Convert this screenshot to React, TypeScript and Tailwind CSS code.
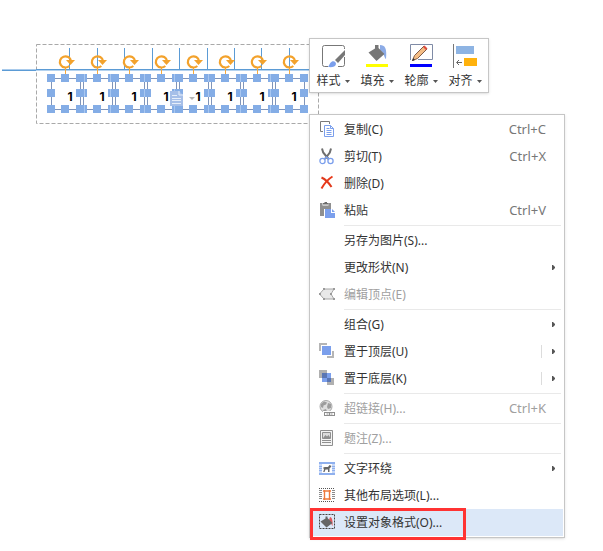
import type { ReactNode } from 'react';

type MenuEntry = {
  label: string;
  icon?: ReactNode;
  shortcut?: string;
  submenu?: boolean;
  split?: boolean;
  disabled?: boolean;
  active?: boolean;
};

function MenuIcon({ children }: { children: ReactNode }) {
  return (
    <svg width="17" height="17" viewBox="0 0 17 17" fill="none" aria-hidden="true">
      {children}
    </svg>
  );
}

const copyIcon = (
  <MenuIcon>
    <path d="M4 10.5H1.5v-10h9V3" stroke="#7a7a7a" />
    <path d="M5.5 4.5h6l3 3v8h-9z" fill="#fff" stroke="#7b9fec" />
    <path d="M11.5 4.5v3h3M7.5 7.5h3M7.5 9.5h5M7.5 11.5h5M7.5 13.5h5" stroke="#7b9fec" />
  </MenuIcon>
);

const cutIcon = (
  <MenuIcon>
    <path d="M3 0.5l1.2 4L9.5 11M12 0.5l-1.2 4L6 11" stroke="#6f6f6f" strokeWidth="2" />
    <circle cx="3.5" cy="13" r="2.6" stroke="#7b9fec" strokeWidth="1.3" />
    <circle cx="11.5" cy="13" r="2.6" stroke="#7b9fec" strokeWidth="1.3" />
    <path d="M5 11.3L7.5 9l2.5 2.3" stroke="#7b9fec" strokeWidth="1.3" />
  </MenuIcon>
);

const deleteIcon = (
  <MenuIcon>
    <path d="M2.500 2.500C6 4 10 8 12.5 12" stroke="#e03a1c" strokeWidth="2" />
    <path d="M13.5 1.5C8.5 4.5 5 9 2.5 13.5" stroke="#e8391a" strokeWidth="2" />
  </MenuIcon>
);

const pasteIcon = (
  <MenuIcon>
    <path d="M1 1h2.5v2.5h6V1H12v6H5v7H1z" fill="#8f8f8f" />
    <path d="M4 1h1.5V0h2.5v1h1.500v1.500H4z" fill="#6c6c6c" />
    <path d="M6 7h6v4h4v5H6z" fill="#7b9fec" />
    <path d="M13 7l3 3h-3z" fill="#7b9fec" />
  </MenuIcon>
);

const verticesIcon = (
  <MenuIcon>
    <path d="M0.5 8L5 3h10l-3 5 3 5H5z" fill="#e8e8e8" stroke="#a6a6a6" />
    <path d="M4 2h2v2H4zM14 2h2v2h-2zM4 12h2v2H4zM14 12h2v2h-2zM0 7h2v2H0zM11 7h2v2h-2z" fill="#9a9a9a" />
  </MenuIcon>
);

const frontIcon = (
  <MenuIcon>
    <path d="M0 0h8v2H2v6H0z" fill="#b5b5b5" />
    <path d="M13 8h2v7H8v-2h5z" fill="#b5b5b5" />
    <path d="M3 3h9v9H3z" fill="#7b9fec" />
  </MenuIcon>
);

const backIcon = (
  <MenuIcon>
    <path d="M3 3h9v9H3z" fill="#7b9fec" />
    <path d="M0 0h8v3H3v5H0z" fill="#b0b0b0" />
    <path d="M12 8h3v7H8v-3h4z" fill="#b0b0b0" />
    <path d="M3 3h5v5H3zM8 8h4v4H8z" fill="#5a76b4" />
  </MenuIcon>
);

const linkIcon = (
  <MenuIcon>
    <circle cx="7" cy="6.500" r="6" fill="#dedede" stroke="#a8a8a8" />
    <path d="M2 4l3-2.5 3 1-1 2-2.5 1L4 8 2 7zM9 3l3 1v4l-3 1-1-2zM4 10l3-1 1 2.500-3 .5z" fill="#9c9c9c" />
    <path d="M4 11h13v6H4z" fill="#fff" />
    <rect x="5.5" y="12.5" width="5" height="3" stroke="#8f8f8f" />
    <rect x="10.5" y="12.5" width="5" height="3" stroke="#8f8f8f" />
    <path d="M7.5 14h2M11.5 14h2" stroke="#8f8f8f" />
  </MenuIcon>
);

const captionIcon = (
  <MenuIcon>
    <path d="M1.5 0.5h12v15h-12z" fill="#f4f4f4" stroke="#8f8f8f" />
    <path d="M3.5 2.5h8v6h-8z" fill="#dcdcdc" stroke="#8f8f8f" />
    <path d="M4 8l2.5-3L8 6.500 9.5 5l2 3z" fill="#8f8f8f" />
    <path d="M3 10.5h9M3 12.5h9" stroke="#8f8f8f" />
  </MenuIcon>
);

const wrapIcon = (
  <MenuIcon>
    <path d="M0 2h16v13H0z" fill="#c9d9f7" />
    <path d="M0 2h16v2H0zM0 13h16v2H0z" fill="#8fb0ee" />
    <path d="M0 6.500h4M0 8.500h4M0 10.500h4M12 6.500h4M12 8.500h4M12 10.500h4" stroke="#8fb0ee" />
    <path d="M3 4h10v9H3z" fill="#fff" />
    <path d="M4 7.500h1l.5-.5H9l1.500-2 2 1-1 1.5-1 1V12H9V9.500H6.500L5.500 12H4.200l.8-2.500z" fill="#666" />
  </MenuIcon>
);

const layoutIcon = (
  <MenuIcon>
    <path d="M0 1.5h16M0 14.5h16" stroke="#555" strokeDasharray="1 1" />
    <path
      d="M0 3.5h3M0 5.5h3M0 7.5h3M0 9.5h3M0 11.5h3M13 3.5h3M13 5.5h3M13 7.5h3M13 9.5h3M13 11.5h3"
      stroke="#8a8a8a"
    />
    <path d="M4 4h8M4 12h8M5.5 3v10M10.5 3v10" stroke="#ee7b3c" strokeWidth="1.4" />
  </MenuIcon>
);

const formatIcon = (
  <MenuIcon>
    <path d="M0.5 0.5h15v14H0.5z" stroke="#444" strokeDasharray="2 1" />
    <path d="M11 3c2 .5 3 3 2.500 9-1-1-1.500-4-3.500-6z" fill="#e0575c" />
    <path d="M1.500 7.500l5-3V2.500h2v1.500l5 5-6 4.500z" fill="#666" />
  </MenuIcon>
);

const menuGroups: MenuEntry[][] = [
  [
    { label: '复制(C)', icon: copyIcon, shortcut: 'Ctrl+C' },
    { label: '剪切(T)', icon: cutIcon, shortcut: 'Ctrl+X' },
    { label: '删除(D)', icon: deleteIcon },
    { label: '粘贴', icon: pasteIcon, shortcut: 'Ctrl+V' },
  ],
  [
    { label: '另存为图片(S)...' },
    { label: '更改形状(N)', submenu: true },
    { label: '编辑顶点(E)', icon: verticesIcon, disabled: true },
  ],
  [
    { label: '组合(G)', submenu: true },
    { label: '置于顶层(U)', icon: frontIcon, submenu: true, split: true },
    { label: '置于底层(K)', icon: backIcon, submenu: true, split: true },
  ],
  [{ label: '超链接(H)...', icon: linkIcon, shortcut: 'Ctrl+K', disabled: true }],
  [{ label: '题注(Z)...', icon: captionIcon, disabled: true }],
  [
    { label: '文字环绕', icon: wrapIcon, submenu: true },
    { label: '其他布局选项(L)...', icon: layoutIcon },
    { label: '设置对象格式(O)...', icon: formatIcon, active: true },
  ],
];

const tools = [
  {
    label: '样式',
    icon: (
      <>
        <path
          d="M7 22.5H3.5a2 2 0 01-2-2v-17a2 2 0 012-2h18a2 2 0 012 2V5M23.5 13v7.5a2 2 0 01-2 2H17"
          stroke="#777"
        />
        <path d="M24 6v5l-7 8-3-3z" fill="#777" />
        <path d="M7 23c1-1 1.5-4 4-5.5 2-1 4 .5 4 2.5-.5 3-4 3.5-8 3z" fill="#7b9fec" />
      </>
    ),
  },
  {
    label: '填充',
    icon: (
      <>
        <path d="M15 1c5 0 7 3 6 14-2-1-1.500-6-6-9z" fill="#8cabe6" />
        <path d="M3.500 8.500L10 4.500V1h3.500v3l6 6-8 7z" fill="#777" />
        <path d="M1 20h22v3H1z" fill="#ffff00" />
      </>
    ),
  },
  {
    label: '轮廓',
    icon: (
      <>
        <path d="M1.5 16V0.5h22v15H9" stroke="#7f8ba6" />
        <path d="M3.5 16.5l2-5L15 2l3 3-9.500 9.500z" fill="#f4bd85" stroke="#805b48" />
        <path d="M14 3l1.5-1.5 3 3L17 6z" fill="#dd4b3f" />
        <path d="M3 17l1.200-3L6 16z" fill="#333" />
        <path d="M1 20h22v3H1z" fill="#0000ff" />
      </>
    ),
  },
  {
    label: '对齐',
    icon: (
      <>
        <path d="M0.5 0v24" stroke="#777" />
        <path d="M3 2h18v8H3z" fill="#8eb4e3" />
        <path d="M11 14h13v8H11z" fill="#ffb20d" />
        <path d="M9 18.5H4M6 16l-2.5 2.5L6 21" stroke="#666" />
      </>
    ),
  },
];

const ticks = [69, 97, 124, 152, 179, 207, 234, 261, 289];
const boxes = [0, 1, 2, 3, 4, 5, 6, 7].map((i) => 51 + i * 32);
const seams = [84, 110, 144, 174, 208, 240, 270];

function Drawing() {
  return (
    <div className="absolute left-0 top-0">
      <svg width="320" height="126" viewBox="0 0 320 126" fill="none" aria-hidden="true">
        <rect x="36.5" y="44.5" width="282" height="79" stroke="#a9a9a9" strokeDasharray="4 2" />
        <path d="M2 69.5h308" stroke="#a9cbec" />
        <path d="M2 70.5h34" stroke="#5b9bd5" />
        <path d="M36 69.5h274" stroke="#5b9bd5" />
        <path d="M36 70.5h274" stroke="#b4d2ef" />
        {ticks.map((x) => (
          <path key={x} d={`M${x + 0.5} 48v21`} stroke="#5b9bd5" />
        ))}
        {boxes.map((x) => (
          <g key={x}>
            <rect x={x + 0.5} y="78.5" width="29" height="31" fill="#fff" stroke="#8095ba" />
            <path d={`M${x + 14.5} 67v7`} stroke="#f5a93c" />
            <path d={`M${x + 18.3} 66a5.600 5.600 0 1 1 1.700-5`} stroke="#f3a22c" strokeWidth="2.2" />
            <path d={`M${x + 15} 60h9l-4.500 5z`} fill="#f3a22c" />
          </g>
        ))}
        {boxes.map((x) => (
          <path
            key={x}
            d={`M${x - 4} 74h8v8h-8zM${x + 10} 74h8v8h-8zM${x + 25} 74h8v8h-8zM${x - 4} 89h8v8h-8zM${x + 25} 89h8v8h-8zM${x - 4} 105h8v8h-8zM${x + 10} 105h8v8h-8zM${x + 25} 105h8v8h-8z`}
            fill="#84ade6"
          />
        ))}
        {seams.map((x) => (
          <path key={x} d={`M${x + 0.5} 74v8m0 7v8m0 8v8`} stroke="#a9c7f0" />
        ))}
      </svg>
      {boxes.map((x) => (
        <span
          key={x}
          className="absolute top-[89px] w-2 text-center font-['Inter',sans-serif] text-[12px] leading-4 font-bold text-black"
          style={{ left: x + 15 }}
        >
          1
        </span>
      ))}
      <svg
        className="absolute left-[170px] top-[91px]"
        width="26"
        height="15"
        viewBox="0 0 26 15"
        fill="none"
        aria-hidden="true"
      >
        <path d="M0 0h9l4 4v11H0z" fill="#a6bfe8" />
        <path d="M9 0v4h4" stroke="#e6eefa" />
        <path d="M2 4.5h5M2 7.5h9M2 9.5h9M2 12.5h9" stroke="#e6eefa" />
        <path d="M19 6h6l-3 3z" fill="#b5b5b5" />
      </svg>
    </div>
  );
}

function ShapeToolbar() {
  return (
    <div
      role="toolbar"
      className="absolute left-[309px] top-[38px] flex w-45 border border-[#c6c6c6] bg-white p-px shadow-sm"
    >
      {tools.map((tool) => (
        <button key={tool.label} type="button" className="flex h-[51px] flex-1 flex-col items-center gap-[5px] pt-1">
          <svg width="24" height="24" viewBox="0 0 24 24" fill="none" aria-hidden="true">
            {tool.icon}
          </svg>
          <span className="flex items-center gap-1 text-xs leading-4">
            {tool.label}
            <svg width="5" height="3" viewBox="0 0 5 3" aria-hidden="true">
              <path d="M0 0h5L2.5 3z" fill="#555" />
            </svg>
          </span>
        </button>
      ))}
    </div>
  );
}

function MenuItem({ entry }: { entry: MenuEntry }) {
  return (
    <button
      type="button"
      role="menuitem"
      disabled={entry.disabled}
      className={`flex h-[27px] w-full items-center pl-2 text-left text-xs ${entry.active ? 'bg-[#dce8f8]' : ''} ${
        entry.disabled ? 'text-[#a0a0a0]' : 'text-[#333]'
      }`}
    >
      <span className="w-[25px] shrink-0">{entry.icon}</span>
      <span className="flex-1">{entry.label}</span>
      {entry.shortcut && (
        <span className={`pr-[17px] text-[13px] ${entry.disabled ? 'text-[#a0a0a0]' : 'text-[#777]'}`}>
          {entry.shortcut}
        </span>
      )}
      {entry.submenu && (
        <span className={`flex h-[13px] items-center pr-2 ${entry.split ? 'border-l border-[#dcdcdc] pl-2.5' : ''}`}>
          <svg width="3" height="5" viewBox="0 0 3 5" aria-hidden="true">
            <path d="M0 0h1l2 2v1L1 5H0z" fill="#555" />
          </svg>
        </span>
      )}
    </button>
  );
}

function ContextMenu() {
  return (
    <div
      role="menu"
      className="absolute left-[309px] top-[114px] w-64 border border-[#c6c6c6] bg-white p-px shadow-sm"
    >
      {menuGroups.map((group, i) => (
        <div key={group[0].label}>
          {i > 0 && <hr className="my-px mr-0.5 ml-[33px] border-[#e9e9e9]" />}
          {group.map((entry) => (
            <MenuItem key={entry.label} entry={entry} />
          ))}
        </div>
      ))}
    </div>
  );
}

export default function App() {
  return (
    <main className="relative min-h-screen overflow-hidden bg-white font-['Noto_Sans','Noto_Sans_CJK_SC',sans-serif] text-[#333]">
      <Drawing />
      <ShapeToolbar />
      <ContextMenu />
      {/* highlight around the last command */}
      <div className="pointer-events-none absolute left-[310px] top-[508px] h-8 w-[156px] border-3 border-[#ff3333]" />
    </main>
  );
}
